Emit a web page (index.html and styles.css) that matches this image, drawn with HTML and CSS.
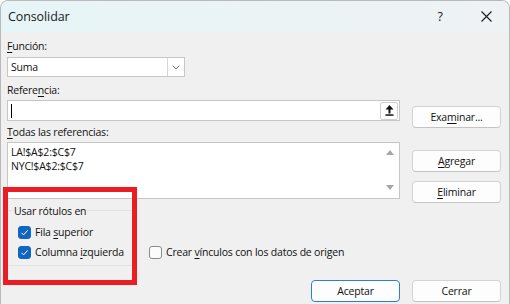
FILE: index.html
```html
<!DOCTYPE html>
<html lang="es">
<head>
<meta charset="utf-8">
<title>Consolidar</title>
<link rel="stylesheet" href="styles.css">
</head>
<body>
<div class="dialog">
  <div class="titlebar">
    <span class="title">Consolidar</span>
    <span class="cap-btn help">?</span>
    <span class="cap-btn close">
      <svg width="11" height="11" viewBox="0 0 11 11"><path d="M0.5 0.5 L10.5 10.5 M10.5 0.5 L0.5 10.5" stroke="#1b1b1b" stroke-width="1.1" fill="none"/></svg>
    </span>
  </div>
  <div class="content">
    <div class="main">
      <div class="left">
        <div class="label l-func"><u>F</u>unción:</div>
        <div class="select">
          <span class="sel-text">Suma</span>
          <span class="sel-btn"><svg width="8" height="5" viewBox="0 0 8 5"><path d="M0.5 0.5 L4 4 L7.5 0.5" stroke="#7a7a7a" stroke-width="1" fill="none"/></svg></span>
        </div>
        <div class="label l-ref">Refere<u>n</u>cia:</div>
        <div class="input">
          <span class="caret"></span>
          <span class="collapse"><svg width="9" height="11" viewBox="0 0 9 11"><path d="M4.5 0 L8.5 4.5 L0.5 4.5 Z" fill="#111"/><rect x="3.5" y="4" width="2" height="4.5" fill="#111"/><rect x="0.5" y="9.3" width="8" height="1.5" fill="#111"/></svg></span>
        </div>
        <div class="label l-all"><u>T</u>odas las referencias:</div>
        <div class="listbox">
          <div class="items">
            <div class="item">LA!$A$2:$C$7</div>
            <div class="item">NYC!$A$2:$C$7</div>
          </div>
          <div class="scroll">
            <svg width="8" height="5" viewBox="0 0 8 5"><path d="M4 0 L8 5 L0 5 Z" fill="#a6a6a6"/></svg>
            <svg width="8" height="5" viewBox="0 0 8 5"><path d="M0 0 L8 0 L4 5 Z" fill="#a6a6a6"/></svg>
          </div>
        </div>
      </div>
      <div class="right">
        <div class="btn b-exam"><span>Exa<u>m</u>inar...</span></div>
        <div class="btn b-add"><span><u>A</u>gregar</span></div>
        <div class="btn b-del"><span><u>E</u>liminar</span></div>
      </div>
    </div>
    <div class="options">
      <div class="group">
        <div class="group-title">Usar rótulos en</div>
        <div class="check c1"><span class="box on"><svg width="13" height="13" viewBox="0 0 13 13"><path d="M3.5 6.8 L5.6 8.9 L9.6 4.4" stroke="#fff" stroke-width="1" fill="none"/></svg></span><span class="ctext">Fila <u>s</u>uperior</span></div>
        <div class="check c2"><span class="box on"><svg width="13" height="13" viewBox="0 0 13 13"><path d="M3.5 6.8 L5.6 8.9 L9.6 4.4" stroke="#fff" stroke-width="1" fill="none"/></svg></span><span class="ctext">Columna <u>i</u>zquierda</span></div>
      </div>
      <div class="check link"><span class="box"></span><span class="ctext">Crear <u>v</u>ínculos con los datos de origen</span></div>
    </div>
    <div class="footer">
      <div class="btn default"><span>Aceptar</span></div>
      <div class="btn"><span>Cerrar</span></div>
    </div>
  </div>
  <div class="highlight"></div>
</div>
</body>
</html>
```
FILE: styles.css
```css
* { box-sizing: border-box; }
html, body { margin: 0; padding: 0; background: #ffffff; }
body {
  font-family: "Open Sans", "Noto Sans", "DejaVu Sans", sans-serif;
  font-size: 10.5px;
  letter-spacing: -0.2px;
  color: #111;
}
u { text-decoration: underline; text-underline-offset: 2px; text-decoration-thickness: 1px; }

.dialog {
  position: relative;
  width: 510px;
  height: 304px;
  background: #f0f0f0;
  border: 1px solid #b9b9b9;
  border-bottom: none;
  border-radius: 8px 8px 0 0;
  overflow: hidden;
}

.titlebar {
  display: flex;
  align-items: center;
  height: 31px;
  background: linear-gradient(to right, #e6f5f7 0%, #ebf3f5 50%, #eef2f4 100%);
}
.title {
  padding-left: 7px;
  font-size: 12.5px;
  letter-spacing: -0.1px;
  color: #1a1a1a;
  flex: 1;
}
.cap-btn {
  width: 46px;
  height: 31px;
  display: flex;
  align-items: center;
  justify-content: center;
}
.help { font-size: 12.5px; color: #1a1a1a; }

.content { padding: 7px 0 0 6px; }
.main { display: flex; align-items: flex-start; gap: 12px; width: 494px; height: 160px; }
.left { width: 393px; display: flex; flex-direction: column; }
.right { width: 89px; display: flex; flex-direction: column; }

.label { line-height: 14px; height: 14px; }
.l-ref { margin-top: 6px; }
.l-all { margin-top: 4px; }

.select {
  margin-top: 4px;
  width: 178px;
  height: 20px;
  background: #fff;
  border: 1px solid #c6c6c6;
  display: flex;
  align-items: center;
}
.sel-text { flex: 1; padding-left: 3px; line-height: 18px; }
.sel-btn {
  width: 17px;
  height: 18px;
  border-left: 1px solid #d6d6d6;
  display: flex;
  align-items: center;
  justify-content: center;
}

.input {
  margin-top: 3px;
  width: 393px;
  height: 21px;
  background: #fff;
  border: 1px solid #c6c6c6;
  display: flex;
  align-items: center;
  justify-content: space-between;
  padding: 0 1px 0 3px;
}
.caret { width: 1px; height: 14px; background: #000; }
.collapse {
  width: 18px;
  height: 18px;
  border: 1px solid #cfcfcf;
  border-radius: 2px;
  background: #fff;
  display: flex;
  align-items: center;
  justify-content: center;
}

.listbox {
  margin-top: 3px;
  width: 393px;
  height: 57px;
  background: #fff;
  border: 1px solid #c6c6c6;
  display: flex;
}
.items { flex: 1; padding: 2px 0 0 3px; }
.item { line-height: 14px; }
.scroll {
  width: 18px;
  display: flex;
  flex-direction: column;
  justify-content: space-between;
  align-items: center;
  padding: 7px 0 8px;
}

.btn {
  width: 89px;
  height: 22px;
  background: #fdfdfd;
  border: 1px solid #d3d3d3;
  border-bottom-color: #c4c4c4;
  border-radius: 4px;
  display: flex;
  align-items: center;
  justify-content: center;
  line-height: 14px;
  color: #111;
}
.b-exam { margin-top: 67px; }
.b-add { margin-top: 22px; }
.b-del { margin-top: 9px; }
.btn.default { border-color: #2a7fd0; }

.options { display: flex; align-items: flex-start; }
.group {
  margin-top: 11px;
  width: 127px;
  height: 56px;
  border: 1px solid #e2e2e2;
}
.group-title {
  display: block;
  width: fit-content;
  margin: -7px 0 0 5px;
  padding: 0 1px;
  height: 14px;
  line-height: 14px;
  background: #f0f0f0;
}
.check {
  display: flex;
  align-items: center;
  gap: 4px;
  height: 13px;
  margin-left: 10px;
}
.ctext { line-height: 13px; white-space: nowrap; }
.c1 { margin-top: 8px; }
.c2 { margin-top: 7px; }
.box {
  width: 13px;
  height: 13px;
  border-radius: 3px;
  border: 1px solid #8a8a8a;
  background: #fbfbfb;
  display: block;
  flex: none;
}
.box svg { display: block; margin: -1px 0 0 -1px; }
.box.on { background: #1066c2; border-color: #1066c2; }
.link { margin-top: 47px; margin-left: 15px; }

.footer {
  width: 494px;
  margin-top: 14px;
  display: flex;
  justify-content: flex-end;
  gap: 12px;
}

.highlight {
  position: absolute;
  left: 2px;
  top: 186px;
  width: 134px;
  height: 98px;
  border: 5px solid #ec1c24;
}
```
